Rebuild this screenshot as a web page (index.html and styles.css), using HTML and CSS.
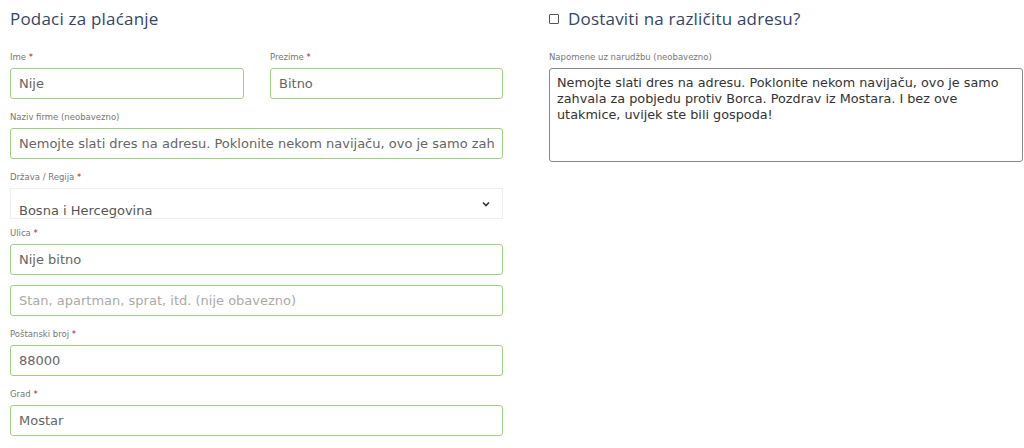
FILE: index.html
```html
<!DOCTYPE html>
<html>
  <head>
    <title>Naplata</title>
    <link rel="stylesheet" href="styles.css">
  </head>
  <body>
    <div class="checkout">
      <div class="billing">
        <h3 class="heading">Podaci za plaćanje</h3>
        <div class="row-two">
          <div class="field">
            <label class="label">Ime <span class="req">*</span></label>
            <input class="input" type="text" value="Nije">
          </div>
          <div class="field">
            <label class="label">Prezime <span class="req">*</span></label>
            <input class="input" type="text" value="Bitno">
          </div>
        </div>
        <div class="field">
          <label class="label">Naziv firme (neobavezno)</label>
          <input class="input" type="text" value="Nemojte slati dres na adresu. Poklonite nekom navijaču, ovo je samo zahvala za pobjedu protiv Borca.">
        </div>
        <div class="field field-select">
          <label class="label">Država / Regija <span class="req">*</span></label>
          <div class="select">
            <span class="select-value">Bosna i Hercegovina</span>
            <svg class="chevron" width="8" height="6" viewBox="0 0 8 6"><path d="M1 1.5 L4 4.5 L7 1.5" fill="none" stroke="#333" stroke-width="1.6"/></svg>
          </div>
        </div>
        <div class="field">
          <label class="label">Ulica <span class="req">*</span></label>
          <input class="input" type="text" value="Nije bitno">
          <input class="input" type="text" placeholder="Stan, apartman, sprat, itd. (nije obavezno)">
        </div>
        <div class="field">
          <label class="label">Poštanski broj <span class="req">*</span></label>
          <input class="input" type="text" value="88000">
        </div>
        <div class="field">
          <label class="label">Grad <span class="req">*</span></label>
          <input class="input" type="text" value="Mostar">
        </div>
      </div>
      <div class="shipping">
        <h3 class="heading">
          <span class="box"></span>
          Dostaviti na različitu adresu?
        </h3>
        <div class="field">
          <label class="label">Napomene uz narudžbu (neobavezno)</label>
          <textarea class="notes">Nemojte slati dres na adresu. Poklonite nekom navijaču, ovo je samo zahvala za pobjedu protiv Borca. Pozdrav iz Mostara. I bez ove utakmice, uvijek ste bili gospoda!</textarea>
        </div>
      </div>
    </div>
  </body>
</html>
```

FILE: styles.css
```css
body {
  margin: 0;
  font-family: "DejaVu Sans", sans-serif;
  background-color: #fff;
  overflow: hidden;
}
.checkout {
  display: grid;
  grid-template-columns: 493px 474px;
  gap: 46px;
  padding: 9px 0 0 10px;
}
.heading {
  margin: 0 0 22px 0;
  font-family: "Open Sans", sans-serif;
  font-weight: 400;
  font-size: 17px;
  line-height: 20px;
  color: #34456a;
  letter-spacing: 0.2px;
  display: flex;
  align-items: center;
}
.box {
  width: 8px;
  height: 8px;
  border: 1px solid #555;
  border-radius: 1px;
  margin-right: 9px;
}
.row-two {
  display: grid;
  grid-template-columns: 234px 233px;
  gap: 26px;
}
.field {
  display: flex;
  flex-direction: column;
  margin-bottom: 12px;
}
.field-select {
  margin-bottom: 8px;
}
.label {
  font-size: 8.5px;
  line-height: 12px;
  color: #777;
  margin-bottom: 5px;
}
.req {
  color: #b5121b;
}
.input {
  height: 31px;
  box-sizing: border-box;
  border: 1px solid #9fd17f;
  border-radius: 3px;
  padding: 0 8px;
  font-family: "DejaVu Sans", sans-serif;
  font-size: 13px;
  color: #666;
  outline: none;
  margin-bottom: 10px;
  background: #fff;
}
.field .input:last-child {
  margin-bottom: 0;
}
.input::placeholder {
  color: #aaa;
}
.select {
  height: 31px;
  box-sizing: border-box;
  border: 1px solid #eee;
  display: flex;
  justify-content: space-between;
  padding: 0 12px 0 8px;
  overflow: hidden;
}
.select-value {
  font-size: 13px;
  color: #555;
  padding-top: 14px;
}
.chevron {
  margin-top: 12px;
}
.notes {
  height: 94px;
  box-sizing: border-box;
  border: 1px solid #888;
  border-radius: 3px;
  padding: 6px 7px;
  font-family: "DejaVu Sans", sans-serif;
  font-size: 12.8px;
  line-height: 16px;
  color: #333;
  resize: none;
  outline: none;
}
```
